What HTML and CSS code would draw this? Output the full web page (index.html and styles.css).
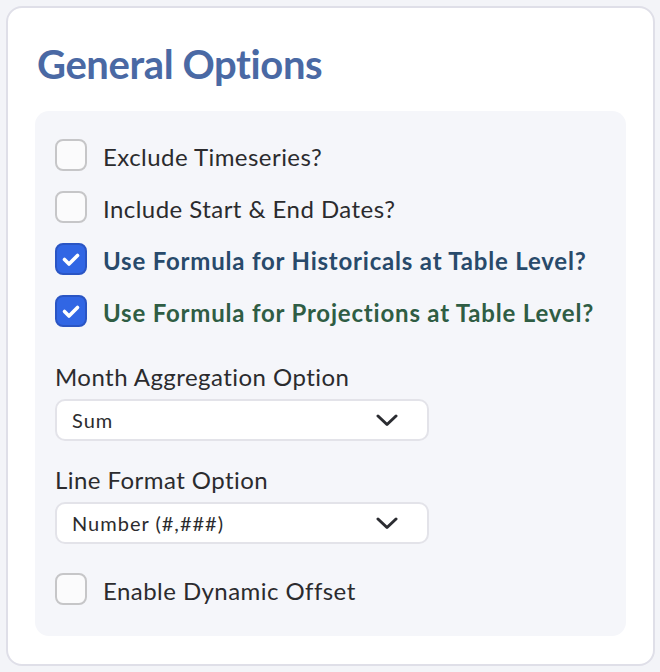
FILE: index.html
```html
<!DOCTYPE html>
<html lang="en">
<head>
<meta charset="utf-8">
<title>General Options</title>
<link rel="stylesheet" href="styles.css">
</head>
<body>
<section class="card">
  <h2 class="title">General Options</h2>
  <div class="panel">
    <ul class="checks">
      <li class="check">
        <span class="box"></span>
        <span class="label">Exclude Timeseries?</span>
      </li>
      <li class="check">
        <span class="box"></span>
        <span class="label">Include Start &amp; End Dates?</span>
      </li>
      <li class="check">
        <span class="box checked"><svg viewBox="0 0 32 32" width="32" height="32"><path d="M9.5 16.5 L14 21 L22.5 12.5" fill="none" stroke="#fff" stroke-width="3.6" stroke-linecap="round" stroke-linejoin="round"/></svg></span>
        <span class="label strong navy">Use Formula for Historicals at Table Level?</span>
      </li>
      <li class="check">
        <span class="box checked"><svg viewBox="0 0 32 32" width="32" height="32"><path d="M9.5 16.5 L14 21 L22.5 12.5" fill="none" stroke="#fff" stroke-width="3.6" stroke-linecap="round" stroke-linejoin="round"/></svg></span>
        <span class="label strong green">Use Formula for Projections at Table Level?</span>
      </li>
    </ul>

    <div class="field field-first">
      <div class="field-label">Month Aggregation Option</div>
      <div class="select">
        <span class="select-value">Sum</span>
        <svg class="chev" viewBox="0 0 22 13" width="22" height="13"><path d="M2 2 L11 10.5 L20 2" fill="none" stroke="#2b2c31" stroke-width="3" stroke-linecap="round" stroke-linejoin="round"/></svg>
      </div>
    </div>

    <div class="field field-second">
      <div class="field-label">Line Format Option</div>
      <div class="select">
        <span class="select-value">Number (#,###)</span>
        <svg class="chev" viewBox="0 0 22 13" width="22" height="13"><path d="M2 2 L11 10.5 L20 2" fill="none" stroke="#2b2c31" stroke-width="3" stroke-linecap="round" stroke-linejoin="round"/></svg>
      </div>
    </div>

    <div class="check last">
      <span class="box"></span>
      <span class="label">Enable Dynamic Offset</span>
    </div>
  </div>
</section>
</body>
</html>
```
FILE: styles.css
```css
html, body {
  margin: 0;
  padding: 0;
}
body {
  background: #f3f4f8;
  font-family: "Lato", "Noto Sans", sans-serif;
  color: #2b2b2e;
  padding: 6px 5px 6px 6px;
}
.card {
  box-sizing: border-box;
  width: 649px;
  height: 660px;
  background: #ffffff;
  border: 2px solid #dfdfe8;
  border-radius: 16px;
  padding: 32px 27px 0 27px;
}
.title {
  margin: 0;
  font-size: 40px;
  line-height: 48px;
  font-weight: 700;
  letter-spacing: -0.4px;
  color: #4a69a4;
  padding-left: 2px;
}
.panel {
  margin-top: 23px;
  background: #f5f6fa;
  border-radius: 14px;
  padding: 28px 20px 31px 20px;
}
.checks {
  list-style: none;
  margin: 0;
  padding: 0;
  display: flex;
  flex-direction: column;
  gap: 20px;
}
.check {
  display: flex;
  align-items: center;
  gap: 16px;
  height: 32px;
}
.box {
  box-sizing: border-box;
  width: 32px;
  height: 32px;
  flex: none;
  border: 2px solid #c6c6c8;
  border-radius: 8px;
  background: #fbfbfc;
  display: flex;
  align-items: center;
  justify-content: center;
}
.box.checked {
  background: #3166e4;
  border-color: #2a55c4;
}
.box svg {
  display: block;
  margin: -2px;
}
.label {
  font-size: 24px;
  line-height: 32px;
  letter-spacing: 0.45px;
  color: #2b2b2e;
  white-space: nowrap;
  margin-top: 4px;
}
.label.strong {
  font-weight: 700;
  letter-spacing: 0.8px;
}
.label.navy {
  color: #284a6b;
}
.label.green {
  color: #2f5d44;
}
.field-first {
  margin-top: 34px;
}
.field-second {
  margin-top: 23px;
}
.field-label {
  font-size: 24px;
  line-height: 32px;
  letter-spacing: 0.45px;
  color: #2b2b2e;
  margin-bottom: 6px;
}
.select {
  box-sizing: border-box;
  width: 374px;
  height: 42px;
  background: #ffffff;
  border: 2px solid #e3e3e9;
  border-radius: 10px;
  display: flex;
  align-items: center;
  justify-content: space-between;
  padding: 0 29px 0 15px;
}
.select-value {
  font-size: 20px;
  letter-spacing: 1px;
  color: #2b2b2e;
}
.chev {
  display: block;
}
.check.last {
  margin-top: 29px;
}
```
